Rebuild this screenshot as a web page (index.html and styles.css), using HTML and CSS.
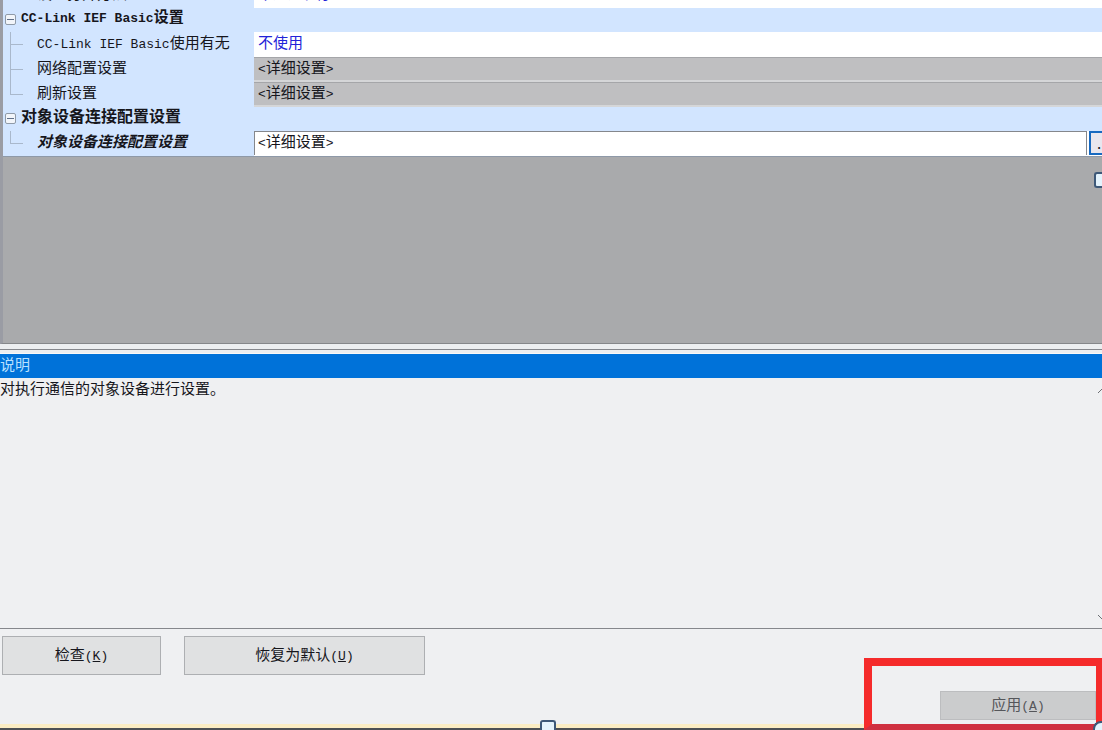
FILE: index.html
```html
<!DOCTYPE html>
<html lang="zh-CN">
<head>
<meta charset="utf-8">
<title>CC-Link IEF Basic设置</title>
<link rel="stylesheet" href="styles.css">
</head>
<body>
<main class="window">
  <section class="grid-pane">
    <table class="props">
      <colgroup><col class="col-name"><col></colgroup>
      <tbody>
        <tr class="item"><th scope="row" class="leaf">设置打开方法</th><td class="blue">不通过程序</td></tr>
        <tr class="group"><th colspan="2"><div class="title"><button class="toggle" aria-label="折叠"></button><span><span class="latin">CC-Link IEF Basic</span>设置</span></div></th></tr>
        <tr class="item"><th scope="row" class="leaf branch"><span class="latin">CC-Link IEF Basic</span>使用有无</th><td class="blue">不使用</td></tr>
        <tr class="item"><th scope="row" class="leaf branch">网络配置设置</th><td class="locked"><span class="latin">&lt;</span>详细设置<span class="latin">&gt;</span></td></tr>
        <tr class="item"><th scope="row" class="leaf branch last">刷新设置</th><td class="locked"><span class="latin">&lt;</span>详细设置<span class="latin">&gt;</span></td></tr>
        <tr class="group"><th colspan="2"><div class="title"><button class="toggle" aria-label="折叠"></button><span class="wide">对象设备连接配置设置</span></div></th></tr>
        <tr class="item"><th scope="row" class="leaf branch last changed">对象设备连接配置设置</th><td class="editing"><div class="editor"><span class="field"><span class="latin">&lt;</span>详细设置<span class="latin">&gt;</span></span><button class="more" aria-label="详细设置">.</button></div></td></tr>
      </tbody>
    </table>
    <span class="handle handle-side"></span>
  </section>
  <div class="splitter"></div>
  <section class="description">
    <h2 class="caption">说明</h2>
    <p class="text">对执行通信的对象设备进行设置。</p>
    <svg class="arrow up" width="4" height="6" viewBox="0 0 4 6"><path d="M0 5 4 1"/></svg>
    <svg class="arrow down" width="4" height="6" viewBox="0 0 4 6"><path d="M0 1 4 5"/></svg>
  </section>
  <footer class="actions">
    <button class="btn check">检查<span class="latin">(<u>K</u>)</span></button>
    <button class="btn restore">恢复为默认<span class="latin">(<u>U</u>)</span></button>
    <div class="highlight"><button class="btn apply" disabled>应用<span class="latin">(<u>A</u>)</span></button></div>
    <span class="handle handle-bottom"></span>
    <span class="handle handle-corner"></span>
  </footer>
</main>
</body>
</html>
```

FILE: styles.css
```css
* { box-sizing: border-box; }

body {
  margin: 0;
  font-family: "Noto Sans CJK SC", sans-serif;
  font-size: 15px;
  line-height: 20px;
  color: #16161c;
  background: #eff0f2;
}

button { font: inherit; color: inherit; padding: 0; }
.latin { font-family: "Liberation Mono", "Noto Sans CJK SC", monospace; font-size: 13px; }

.window {
  display: flex;
  flex-direction: column;
  height: 100vh;
  overflow: hidden;
}

.grid-pane {
  position: relative;
  flex: 3 1 0;
  overflow: hidden;
  background: #a9aaac;
  border-left: 3px solid #9a9ca4;
  border-bottom: 1px solid #85878a;
}

.props {
  width: 100%;
  margin-top: -17px;
  table-layout: fixed;
  border-collapse: separate;
  border-spacing: 0;
  border-bottom: 1px solid #8e99a8;
}
.col-name { width: 251px; }
.props th, .props td { padding: 0; text-align: left; white-space: nowrap; vertical-align: top; }
.props th { background-color: #d2e5ff; }
.item, .item > * { height: 25px; }
.group, .group > * { height: 24px; }
.item th { font-weight: 400; }
.item .leaf { padding-left: 34px; }
.props td { background: #fff; padding-left: 4px; }
.props td.blue { color: #2222d8; }
.props td.locked { background: #bfbfc1; border-top: 1px solid #a5a6a9; border-bottom: 2px solid #d5d6d8; line-height: 18px; }
.props .changed { font-weight: 700; font-style: italic; }

.title { display: flex; align-items: flex-start; gap: 5px; padding-left: 2px; line-height: 16px; }
.wide { font-size: 16px; }
.toggle {
  width: 11px;
  height: 11px;
  margin-top: 6px;
  border: 1px solid #8f9aa8;
  border-radius: 2px;
  background: linear-gradient(#60708a, #60708a) center / 7px 1px no-repeat #f2f5fa;
}

.branch {
  background-image: linear-gradient(#a9b8cc, #a9b8cc), linear-gradient(#a9b8cc, #a9b8cc);
  background-repeat: no-repeat;
  background-position: 7px 0, 7px 12px;
  background-size: 1px 100%, 13px 1px;
}
.branch.last { background-size: 1px 12px, 13px 1px; }

.props td.editing { padding: 0; }
.editor { display: flex; height: 24px; }
.field { flex: 1; border: 1px solid #85878c; border-bottom: 0; padding-left: 3px; line-height: 18px; }
.more {
  width: 13px;
  margin-left: 2px;
  border: 2px solid #1769c0;
  border-right: 0;
  background: #e8e6ee;
  text-align: left;
  padding-left: 6px;
}

.splitter { height: 10px; background: #eceef0; border-bottom: 1px solid #f8f8f8; }
.splitter::before { content: ""; display: block; height: 5px; border-bottom: 1px solid #85878c; }

.description {
  position: relative;
  flex: 0 0 275px;
  border-bottom: 1px solid #85878c;
}
.caption { margin: 0; height: 24px; background: #0072d9; color: #b9e0ff; font-size: 15px; font-weight: 400; }
.text { margin: 0; }
.arrow { position: absolute; right: 0; fill: none; stroke: #6d6f74; }
.up { top: 34px; }
.down { bottom: 8px; }

.actions {
  position: relative;
  flex: 0 0 101px;
  display: flex;
  align-items: flex-start;
  gap: 23px;
  padding: 7px 0 0 2px;
  border-bottom: 2px solid #4d5054;
  box-shadow: inset 0 -4px #fbedc4;
}
.btn { height: 39px; border: 1px solid #adafb2; background: #e0e1e2; }
.check { width: 159px; }
.restore { width: 241px; }

.highlight {
  position: absolute;
  right: 0;
  bottom: -2px;
  width: 238px;
  height: 72px;
  display: flex;
  justify-content: flex-end;
  align-items: flex-end;
  padding-bottom: 4px;
  border: solid #f52b2b;
  border-width: 8px 6px 6px 8px;
  border-bottom-color: #cf3040;
  background: #eff0f2;
}
.apply { width: 156px; height: 29px; border-color: #bcbdbf; background: #cbcccd; color: #55565a; }

.handle { position: absolute; border: 2px solid #3d5878; background: #e4f3fc; }
.handle-side { top: 172px; right: 0; width: 8px; height: 16px; border-right: 0; border-radius: 3px 0 0 3px; }
.handle-bottom { left: 49%; bottom: -2px; width: 16px; height: 10px; border-bottom: 0; border-radius: 3px 3px 0 0; }
.handle-corner { right: 0; bottom: -2px; width: 9px; height: 9px; border-right: 0; border-bottom: 0; border-radius: 8px 0 0 0; }
```
